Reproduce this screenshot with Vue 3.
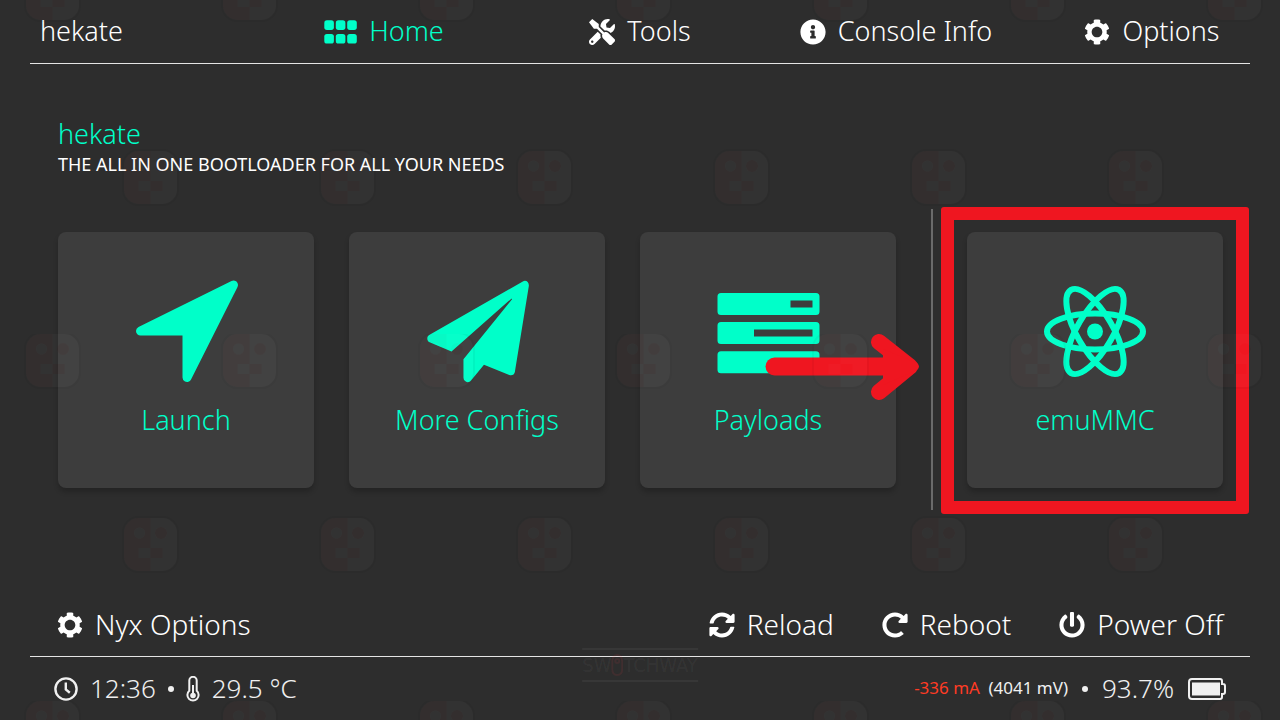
<script setup>
import { ref } from 'vue'

const icons = {
  tools: 'M501.1 395.7L384 278.6c-23.1-23.1-57.6-27.6-85.4-13.9L192 158.1V96L64 0 0 64l96 128h62.1l106.6 106.6c-13.6 27.8-9.2 62.3 13.9 85.4l117.1 117.1c14.6 14.6 38.2 14.6 52.7 0l52.7-52.7c14.5-14.6 14.5-38.2 0-52.7zM331.7 225c28.3 0 54.9 11 74.9 31l19.4 19.4c15.8-6.9 30.8-16.5 43.8-29.5 37.1-37.1 49.7-89.3 37.9-136.7-2.2-9-13.5-12.1-20.1-5.5l-74.4 74.4-67.9-11.3L334 98.9l74.4-74.4c6.6-6.6 3.4-17.9-5.7-20.2-47.4-11.7-99.6.9-136.6 37.9-28.5 28.5-41.9 66.1-41.2 103.6l82.1 82.1c8.1-1.9 16.5-2.9 24.7-2.9zm-103.9 82l-56.7-56.7L18.7 402.8c-25 25-25 65.5 0 90.5s65.5 25 90.5 0l123.6-123.6c-7.6-19.9-9.9-41.6-5-62.7zM64 472c-13.2 0-24-10.8-24-24 0-13.3 10.7-24 24-24s24 10.7 24 24c0 13.2-10.7 24-24 24z',
  info: 'M256 8C119.043 8 8 119.083 8 256c0 136.997 111.043 248 248 248s248-111.003 248-248C504 119.083 392.957 8 256 8zm0 110c23.196 0 42 18.804 42 42s-18.804 42-42 42-42-18.804-42-42 18.804-42 42-42zm56 254c0 6.627-5.373 12-12 12h-88c-6.627 0-12-5.373-12-12v-24c0-6.627 5.373-12 12-12h12v-64h-12c-6.627 0-12-5.373-12-12v-24c0-6.627 5.373-12 12-12h64c6.627 0 12 5.373 12 12v100h12c6.627 0 12 5.373 12 12v24z',
  cog: 'M487.4 315.7l-42.6-24.6c4.3-23.2 4.3-47 0-70.2l42.6-24.6c4.9-2.8 7.1-8.6 5.5-14-11.1-35.6-30-67.8-54.7-94.6-3.8-4.1-10-5.1-14.8-2.3L380.8 110c-17.9-15.4-38.5-27.3-60.8-35.1V25.8c0-5.6-3.9-10.5-9.4-11.7-36.7-8.2-74.3-7.8-109.2 0-5.5 1.2-9.4 6.1-9.4 11.7V75c-22.2 7.9-42.8 19.8-60.8 35.1L88.7 85.5c-4.9-2.8-11-1.9-14.8 2.3-24.7 26.7-43.6 58.9-54.7 94.6-1.7 5.4.6 11.2 5.5 14L67.3 221c-4.3 23.2-4.3 47 0 70.2l-42.6 24.6c-4.9 2.8-7.1 8.6-5.5 14 11.1 35.6 30 67.8 54.7 94.6 3.8 4.1 10 5.1 14.8 2.3l42.6-24.6c17.9 15.4 38.5 27.3 60.8 35.1v49.2c0 5.6 3.9 10.5 9.4 11.7 36.7 8.2 74.3 7.8 109.2 0 5.5-1.2 9.4-6.1 9.4-11.7v-49.2c22.2-7.9 42.8-19.8 60.8-35.1l42.6 24.6c4.9 2.8 11 1.9 14.8-2.3 24.7-26.7 43.6-58.9 54.7-94.6 1.5-5.5-.7-11.3-5.6-14.1zM256 361c-58 0-105-47-105-105s47-105 105-105 105 47 105 105-47 105-105 105z',
  reload: 'M370.72 133.28C339.458 104.008 298.888 87.962 255.848 88c-77.458.068-144.328 53.178-162.791 126.85-1.344 5.363-6.122 9.15-11.651 9.15H24.103c-7.498 0-13.194-6.807-11.807-14.176C33.933 94.924 134.813 8 256 8c66.448 0 126.791 26.136 171.315 68.685L463.03 40.97C478.149 25.851 504 36.559 504 57.941V192c0 13.255-10.745 24-24 24H345.941c-21.382 0-32.09-25.851-16.971-40.971l41.75-41.749zM32 296h134.059c21.382 0 32.09 25.851 16.971 40.971l-41.75 41.75c31.262 29.273 71.835 45.319 114.876 45.28 77.418-.07 144.315-53.144 162.787-126.849 1.344-5.363 6.122-9.15 11.651-9.15h57.304c7.498 0 13.194 6.807 11.807 14.176C478.067 417.076 377.187 504 256 504c-66.448 0-126.791-26.136-171.315-68.685L48.97 471.03C33.851 486.149 8 475.441 8 454.059V320c0-13.255 10.745-24 24-24z',
  reboot: 'M256.455 8c66.269.119 126.437 26.233 170.859 68.685l35.715-35.715C478.149 25.851 504 36.559 504 57.941V192c0 13.255-10.745 24-24 24H345.941c-21.382 0-32.09-25.851-16.971-40.971l41.75-41.75c-30.864-28.899-70.801-44.907-113.23-45.273-92.398-.798-170.283 73.977-169.484 169.442C88.764 348.009 162.184 424 256 424c41.127 0 79.997-14.678 110.629-41.556 4.743-4.161 11.906-3.908 16.368.553l39.662 39.662c4.872 4.872 4.631 12.815-.482 17.433C378.202 479.813 319.926 504 256 504 119.034 504 8.001 392.967 8 256.002 7.999 119.193 119.646 7.755 256.455 8z',
  power: 'M400 54.1c63 45 104 118.6 104 201.9 0 136.8-110.8 247.7-247.5 248C120 504.3 8.2 393 8 256.4 7.9 173.1 48.9 99.3 111.8 54.2c11.7-8.3 28-4.8 35 7.7L162.6 90c5.9 10.5 3.1 23.8-6.6 31-41.5 30.8-68 79.6-68 134.9-.1 92.3 74.5 168.1 168 168.1 91.6 0 168.6-74.2 168-169.1-.3-51.8-24.7-101.8-68.1-134-9.7-7.2-12.4-20.5-6.5-30.9l15.8-28.1c7-12.4 23.2-16.1 34.8-7.8zM296 264V24c0-13.3-10.7-24-24-24h-32c-13.3 0-24 10.7-24 24v240c0 13.3 10.7 24 24 24h32c13.3 0 24-10.7 24-24z',
}

const tabs = [
  { label: 'Home', icon: 'grid' },
  { label: 'Tools', icon: 'tools' },
  { label: 'Console Info', icon: 'info' },
  { label: 'Options', icon: 'cog' },
]
const active = ref('Home')

const power = [
  { label: 'Reload', icon: 'reload' },
  { label: 'Reboot', icon: 'reboot' },
  { label: 'Power Off', icon: 'power' },
]
</script>

<template>
  <div class="screen">
    <header class="top">
      <nav class="tabs">
        <button class="tab brand" type="button"><span class="label">hekate</span></button>
        <button
          v-for="tab in tabs"
          :key="tab.label"
          type="button"
          class="tab"
          :class="{ active: tab.label === active }"
          @click="active = tab.label"
        >
          <svg v-if="tab.icon === 'grid'" class="grid-icon" viewBox="0 0 33 24" aria-hidden="true">
            <rect x="0.3" y="0.3" width="9.6" height="9.6" rx="2.6" />
            <rect x="11.8" y="0.3" width="9.6" height="9.6" rx="2.6" />
            <rect x="23.2" y="0.3" width="9.6" height="9.6" rx="2.6" />
            <rect x="0.3" y="14" width="9.6" height="9.6" rx="2.6" />
            <rect x="11.8" y="14" width="9.6" height="9.6" rx="2.6" />
            <rect x="23.2" y="14" width="9.6" height="9.6" rx="2.6" />
          </svg>
          <svg v-else class="icon" viewBox="0 0 512 512" aria-hidden="true"><path :d="icons[tab.icon]" /></svg>
          <span class="label">{{ tab.label }}</span>
        </button>
      </nav>
    </header>

    <main class="content">
      <h1 class="title">hekate</h1>
      <p class="subtitle">THE ALL IN ONE BOOTLOADER FOR ALL YOUR NEEDS</p>

      <div class="cards">
        <button class="card" type="button">
          <svg class="art" viewBox="0 0 102 102" aria-hidden="true">
            <path d="M5.5 51L98.5 5L52 97.5V51z" stroke="currentColor" stroke-width="9" stroke-linejoin="round" />
          </svg>
          <span>Launch</span>
        </button>
        <button class="card" type="button">
          <svg class="art" viewBox="0 0 512 512" aria-hidden="true">
            <path d="M486 7L16 276c-14 9-12 30 2 37l110 46L427 95c4-3 6 0 4 3L188 398v92c0 22 25 31 38 15L291 426l127 51c13 5 26-2 28-15l70-431C519 10 501-2 486 7z" />
          </svg>
          <span>More Configs</span>
        </button>
        <div class="slot">
          <button class="card" type="button">
            <svg class="art" viewBox="0 0 102 102" aria-hidden="true">
              <path fill-rule="evenodd" d="M4 13h95a3.500 3.500 0 0 1 3.500 3.500v15a3.500 3.500 0 0 1-3.500 3.500H4a3.500 3.500 0 0 1-3.500-3.500v-15A3.500 3.500 0 0 1 4 13zM73.500 20.500v7h22v-7zM4 42h95a3.500 3.500 0 0 1 3.500 3.500v15a3.500 3.500 0 0 1-3.500 3.500H4a3.500 3.500 0 0 1-3.500-3.500v-15A3.500 3.500 0 0 1 4 42zM37 49.500v7h58.500v-7zM4 71.200h95a3.500 3.500 0 0 1 3.500 3.500v15a3.500 3.500 0 0 1-3.500 3.500H4a3.500 3.500 0 0 1-3.500-3.500v-15A3.500 3.500 0 0 1 4 71.200z" />
            </svg>
            <span>Payloads</span>
          </button>
          <svg class="arrow" viewBox="0 0 154 68" aria-hidden="true">
            <path d="M9.500 33.500H140" stroke-width="18" />
            <path d="M114 9l31 24.500L114 59" stroke-width="16" />
            <path class="tip" d="M118 16l34 14q4 3.500 0 7L118 52z" />
          </svg>
        </div>
        <div class="divider"></div>
        <div class="slot">
          <button class="card" type="button">
            <svg class="art" viewBox="0 0 102 102" aria-hidden="true">
              <g fill="none" stroke="currentColor" stroke-width="6">
                <ellipse cx="51" cy="51.500" rx="48" ry="18" />
                <ellipse cx="51" cy="51.500" rx="48" ry="18" transform="rotate(60 51 51.500)" />
                <ellipse cx="51" cy="51.500" rx="48" ry="18" transform="rotate(120 51 51.500)" />
              </g>
              <circle cx="51" cy="51.500" r="8" />
            </svg>
            <span>emuMMC</span>
          </button>
          <div class="highlight"></div>
        </div>
      </div>
    </main>

    <footer>
      <div class="actions">
        <button class="action" type="button">
          <svg class="icon" viewBox="0 0 512 512" aria-hidden="true"><path :d="icons.cog" /></svg>
          <span class="label">Nyx Options</span>
        </button>
        <div class="power">
          <button v-for="item in power" :key="item.label" class="action" type="button">
            <svg class="icon" viewBox="0 0 512 512" aria-hidden="true"><path :d="icons[item.icon]" /></svg>
            <span class="label">{{ item.label }}</span>
          </button>
        </div>
      </div>

      <div class="status">
        <div class="group">
          <svg class="clock" viewBox="0 0 24 24" aria-hidden="true">
            <circle cx="12" cy="12" r="10.600" />
            <path d="M11.800 5.500v7l4 3.200" />
          </svg>
          <span class="label">12:36</span>
          <span class="dot"></span>
          <svg class="thermo" viewBox="0 0 14 26" aria-hidden="true">
            <path d="M3.300 14.800V4.500a3.700 3.700 0 0 1 7.400 0v10.300a5.600 5.600 0 1 1-7.400 0z" fill="none" stroke="currentColor" stroke-width="2" />
            <path d="M7 9v10" stroke="currentColor" stroke-width="2" />
            <circle cx="7" cy="19.500" r="2.800" />
          </svg>
          <span class="label">29.5 °C</span>
        </div>
        <div class="group readings">
          <span class="label small"><span class="current">-336 mA</span> (4041 mV)</span>
          <span class="dot"></span>
          <span class="label">93.7%</span>
          <svg class="battery" viewBox="0 0 38 22" aria-hidden="true">
            <path d="M4 1h28q2 0 2 2v3h1q2 0 2 2v6q0 2-2 2h-1v3q0 2-2 2H4q-3 0-3-3V4q0-3 3-3z" fill="none" stroke="currentColor" stroke-width="2" />
            <rect x="4" y="4.500" width="28" height="13" />
          </svg>
        </div>
      </div>
    </footer>

    <svg class="faces" aria-hidden="true">
      <defs>
        <g id="face">
          <rect x="-1" y="-1" width="55" height="55" rx="15" fill="none" stroke="#000" stroke-opacity="0.04" stroke-width="2" />
          <path d="M26.500 0H15A15 15 0 0 0 0 15v23a15 15 0 0 0 15 15h11.500V40H14.500V30h12zM15.500 9.500a5.500 5.500 0 1 1 0 11a5.500 5.500 0 1 1 0-11z" fill="#f03a44" fill-opacity="0.03" fill-rule="evenodd" />
          <circle cx="15.500" cy="15" r="5.500" fill="#fff" fill-opacity="0.025" />
          <rect x="14.500" y="30" width="12" height="10" fill="#fff" fill-opacity="0.025" />
          <path d="M26.500 0H38a15 15 0 0 1 15 15v23a15 15 0 0 1-15 15H26.500V40h12V30h-12zM37 9a6 6 0 1 0 0 12a6 6 0 1 0 0-12z" fill="#fff" fill-opacity="0.025" fill-rule="evenodd" />
          <circle cx="37" cy="15" r="6" fill="#f03a44" fill-opacity="0.03" />
          <rect x="26.500" y="30" width="12" height="10" fill="#f03a44" fill-opacity="0.03" />
        </g>
        <pattern id="tile" x="0" y="-33" width="197" height="367" patternUnits="userSpaceOnUse">
          <use href="#face" x="26" y="0" />
          <use href="#face" x="124" y="184" />
        </pattern>
      </defs>
      <rect width="100%" height="100%" fill="url(#tile)" />
    </svg>

    <div class="wordmark" aria-hidden="true">
      <span>SW</span>
      <svg viewBox="0 0 12 22"><path d="M6 1Q1 2 1 7v8q0 6 5 6t5-6V7Q11 2 6 1z" /><circle cx="6" cy="7" r="2" /></svg>
      <span>TCHWAY</span>
    </div>
  </div>
</template>

<style>
body {
  margin: 0;
  background: #2d2d2d;
}
</style>

<style scoped>
.screen {
  position: relative;
  display: flex;
  flex-direction: column;
  min-height: 100vh;
  overflow: hidden;
  background: #2d2d2d;
  color: #fff;
  font-family: "Noto Sans", "Open Sans", sans-serif;
  font-size: 27px;
  font-weight: 300;
  line-height: 36px;
}

button {
  margin: 0;
  padding: 0;
  border: 0;
  background: none;
  color: inherit;
  font: inherit;
  cursor: pointer;
}

svg {
  display: block;
  flex: none;
  fill: currentColor;
}

.icon {
  width: 26px;
  height: 26px;
}

.label {
  padding-bottom: 2px;
}

.top::after,
.actions::after {
  content: "";
  grid-column: 1 / -1;
  height: 1px;
  margin: 0 30px;
  background: #e4e4e4;
}

.top {
  display: grid;
}

.tabs {
  display: grid;
  grid-template-columns: repeat(5, 1fr);
  height: 63px;
}

.tab {
  display: flex;
  align-items: center;
  justify-content: center;
  gap: 12px;
}

.brand {
  justify-content: flex-start;
  padding-left: 40px;
}

.active {
  color: #00ffc9;
}

.grid-icon {
  width: 33px;
  height: 24px;
}

.content {
  flex: 1;
  padding: 52px 57px 0 58px;
}

.title {
  margin: 0;
  color: #00ffc9;
  font-size: 27px;
  font-weight: 300;
  line-height: 36px;
}

.subtitle {
  margin: 0;
  font-size: 18px;
  font-weight: 400;
  line-height: 24px;
}

.cards {
  display: grid;
  grid-template-columns: 1fr 1fr 1fr 1px 1fr;
  gap: 35px;
  margin-top: 56px;
}

.slot {
  position: relative;
  display: grid;
}

.card {
  display: flex;
  flex-direction: column;
  align-items: center;
  gap: 20px;
  aspect-ratio: 1;
  padding-top: 48px;
  border-radius: 8px;
  background: #3d3d3d;
  box-shadow: 0 4px 5px rgba(0, 0, 0, 0.2);
  color: #00ffc9;
}

.art {
  width: 102px;
  height: 102px;
  overflow: visible;
}

.divider {
  width: 2px;
  margin: -23px 0 -22px;
  background: #6a6a6a;
}

.arrow {
  position: absolute;
  top: 101px;
  left: 125px;
  z-index: 1;
  width: 154px;
  height: 68px;
  fill: none;
  stroke: #ef1620;
  stroke-linecap: round;
  stroke-linejoin: round;
}

.arrow .tip {
  fill: #ef1620;
  stroke: none;
}

.highlight {
  position: absolute;
  inset: -25px -26px -26px;
  border: 13px solid #ef1620;
  border-radius: 3px;
  pointer-events: none;
}

.actions {
  display: grid;
  grid-template-columns: auto auto;
  grid-template-rows: 62px 1px;
  justify-content: stretch;
  font-size: 28px;
}

.action {
  display: flex;
  align-items: center;
  gap: 12px;
}

.actions > .action {
  justify-self: start;
  margin-left: 57px;
}

.power {
  display: flex;
  justify-content: flex-end;
  gap: 48px;
  padding-right: 57px;
}

.status {
  display: flex;
  align-items: center;
  justify-content: space-between;
  height: 63px;
  padding: 0 54px;
  color: #f0f0f0;
  font-size: 26px;
}

.group {
  display: flex;
  align-items: center;
  gap: 12px;
}

.readings {
  gap: 14px;
}

.clock {
  width: 24px;
  height: 24px;
  fill: none;
  stroke: currentColor;
  stroke-width: 2.4;
}

.dot {
  width: 6px;
  height: 6px;
  border-radius: 50%;
  background: currentColor;
}

.thermo {
  width: 14px;
  height: 26px;
}

.small {
  font-size: 17px;
  font-weight: 400;
}

.current {
  margin-right: 4px;
  color: #ff3b24;
}

.battery {
  width: 38px;
  height: 22px;
}

.faces {
  position: absolute;
  inset: 0;
  z-index: 2;
  width: 100%;
  height: 100%;
  pointer-events: none;
}

.wordmark {
  position: absolute;
  bottom: 38px;
  left: 50%;
  z-index: 2;
  display: flex;
  align-items: center;
  height: 30px;
  border-top: 2px solid;
  border-bottom: 2px solid;
  transform: translateX(-50%);
  color: rgba(255, 255, 255, 0.05);
  font-family: "DejaVu Sans Condensed", "DejaVu Sans", sans-serif;
  font-size: 20px;
  font-weight: 400;
  pointer-events: none;
}

.wordmark svg {
  width: 12px;
  height: 22px;
  fill: none;
  stroke: rgba(240, 58, 68, 0.1);
  stroke-width: 2;
}
</style>
